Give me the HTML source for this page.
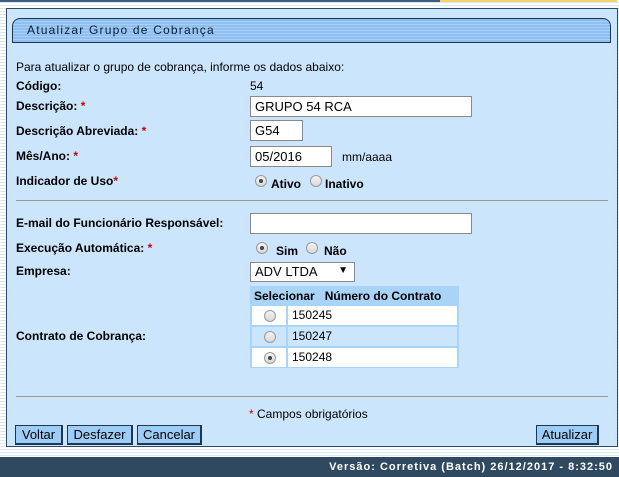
<!DOCTYPE html>
<html><head><meta charset="utf-8"><style>
*{box-sizing:border-box;margin:0;padding:0}
body{width:619px;height:477px;overflow:hidden;position:relative;font-family:"Liberation Sans",Arial,sans-serif;font-size:12px;color:#000;
background:repeating-linear-gradient(#fff 0,#fff 2px,#dbe7f3 2px,#dbe7f3 3px);}
.a{position:absolute;white-space:nowrap}
.b{font-weight:bold}
.r{color:#c00}
#panel{position:absolute;left:6px;top:8px;width:612px;height:439px;background:#cbe5fc;border:1px solid #2c4a6b}
#hdr{position:absolute;left:12px;top:18px;width:599px;height:25px;border:1px solid #1f3550;border-radius:8px 8px 0 0;
background:repeating-linear-gradient(#8fbff0 0,#8fbff0 2px,#a8d0f6 2px,#a8d0f6 3px);}
#hdr span{position:absolute;left:14px;top:4px;letter-spacing:1.2px;font-size:12px;color:#0d1f33}
.in{position:absolute;background:#fff;border:1px solid #8a8a8a;height:21px;padding:2px 4px;font-size:13px}
hr{position:absolute;left:16px;width:592px;border:0;border-top:1px solid #999}
.rad{position:absolute;width:12px;height:12px;border-radius:50%;border:1px solid #9a9a9a;background:linear-gradient(#f4f4f4,#d8d8d8)}
.rad.on::after{content:"";position:absolute;left:3px;top:3px;width:4px;height:4px;border-radius:50%;background:#444}
.btn{position:absolute;top:425px;height:20px;background:#9ccdf7;border:1px solid #1f3550;border-right-width:2px;border-bottom-width:2px;font-size:13px;padding:1px 0 0;text-align:center}
#tbl{position:absolute;left:250px;top:286px;width:209px;height:82px;background:#a8d4f8}
.row{position:absolute;left:2px;width:205px;height:19px;background:#fff}
.row .c1{position:absolute;left:0;top:0;width:36px;height:19px;background:#fff;border-right:2px solid #a8d4f8}
.row span{position:absolute;left:40px;top:2px}
#foot{position:absolute;left:0;top:457px;width:619px;height:20px;background:#2f4a60;color:#fff;font-weight:bold;letter-spacing:1px;font-size:11px;text-align:right;padding:4px 6px 0 0}
</style></head><body>
<div class="a" style="left:0;top:0;width:440px;height:2px;background:#3c5a7c"></div>
<div class="a" style="left:440px;top:0;width:177px;height:2px;background:#f1d46a"></div>
<div id="panel"></div>
<div id="hdr"><span>Atualizar Grupo de Cobrança</span></div>

<div class="a" style="left:16px;top:60px">Para atualizar o grupo de cobrança, informe os dados abaixo:</div>
<div class="a b" style="left:16px;top:79px">Código:</div>
<div class="a" style="left:250px;top:79px">54</div>
<div class="a b" style="left:16px;top:99px">Descrição: <span class="r">*</span></div>
<div class="in" style="left:250px;top:96px;width:222px">GRUPO 54 RCA</div>
<div class="a b" style="left:16px;top:124px">Descrição Abreviada: <span class="r">*</span></div>
<div class="in" style="left:250px;top:120px;width:53px">G54</div>
<div class="a b" style="left:16px;top:149px">Mês/Ano: <span class="r">*</span></div>
<div class="in" style="left:250px;top:146px;width:82px">05/2016</div>
<div class="a" style="left:342px;top:150px">mm/aaaa</div>
<div class="a b" style="left:16px;top:174px">Indicador de Uso<span class="r">*</span></div>
<div class="rad on" style="left:255px;top:175px"></div>
<div class="a b" style="left:271px;top:177px">Ativo</div>
<div class="rad" style="left:310px;top:175px"></div>
<div class="a b" style="left:325px;top:177px">Inativo</div>
<hr style="top:200px">
<div class="a b" style="left:16px;top:216px">E-mail do Funcionário Responsável:</div>
<div class="in" style="left:250px;top:213px;width:222px"></div>
<div class="a b" style="left:16px;top:241px">Execução Automática: <span class="r">*</span></div>
<div class="rad on" style="left:256px;top:242px"></div>
<div class="a b" style="left:276px;top:244px">Sim</div>
<div class="rad" style="left:306px;top:242px"></div>
<div class="a b" style="left:324px;top:244px">Não</div>
<div class="a b" style="left:16px;top:264px">Empresa:</div>
<div class="in" style="left:250px;top:262px;width:105px;height:20px;padding:1px 4px">ADV LTDA<span style="position:absolute;right:6px;top:2px;font-size:10px">▼</span></div>
<div id="tbl">
<div class="a b" style="left:4px;top:3px">Selecionar&nbsp;&nbsp; Número do Contrato</div>
<div class="row" style="top:20px"><div class="c1"></div><span>150245</span></div>
<div class="row" style="top:41px;background:#cbe5fc"><div class="c1" style="background:#cbe5fc"></div><span>150247</span></div>
<div class="row" style="top:62px"><div class="c1"></div><span>150248</span></div>
</div>
<div class="rad" style="left:264px;top:310px"></div>
<div class="rad" style="left:264px;top:331px"></div>
<div class="rad on" style="left:264px;top:352px"></div>
<div class="a b" style="left:16px;top:329px">Contrato de Cobrança:</div>
<hr style="top:396px">
<div class="a" style="left:249px;top:407px"><span class="r">*</span> Campos obrigatórios</div>
<div class="btn" style="left:15px;width:48px">Voltar</div>
<div class="btn" style="left:67px;width:66px">Desfazer</div>
<div class="btn" style="left:137px;width:65px">Cancelar</div>
<div class="btn" style="left:536px;width:63px">Atualizar</div>
<div id="foot">Versão: Corretiva (Batch) 26/12/2017 - 8:32:50</div>
</body></html>
